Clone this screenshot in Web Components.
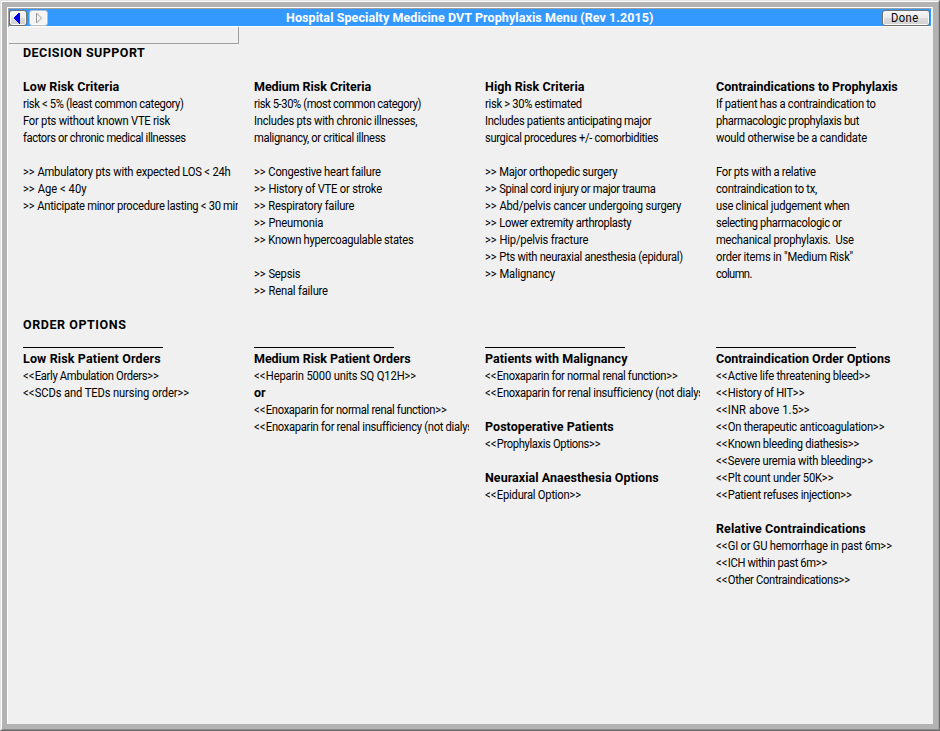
<!DOCTYPE html>
<html lang="en"><head><meta charset="utf-8"><title>DVT Prophylaxis Menu</title>
<style>html,body{margin:0;height:100%;overflow:hidden}body{font-family:Roboto,"Liberation Sans",sans-serif;font-size:12px;color:#000}</style></head><body>
<menu-window></menu-window>
<script>
const make=(el,html)=>{const t=document.createElement('template');t.innerHTML=html;const r=el.attachShadow({mode:'open'});r.append(t.content.cloneNode(true));return r};

// A single line of text whose tracking is adjusted to fill the given width.
class TextLine extends HTMLElement{
 connectedCallback(){
  if(this.shadowRoot)return;
  const r=make(this,`<style>:host{display:block;height:17px;line-height:19px;white-space:pre;overflow:hidden;font-size:12.3px}:host([bold]){font-weight:700;font-size:12.5px;line-height:17px}span{display:inline-block;transform-origin:0 0;transform:scaleX(.91)}:host([bold]) span{transform:none}::slotted(i){display:inline-block;width:13px;font-style:normal;letter-spacing:0}</style><span><slot></slot></span>`);
  const s=r.querySelector('span'),w=+this.getAttribute('w'),k=this.hasAttribute('bold')?1:.91;
  const marks=this.querySelectorAll('i').length*2;
  if(w)s.style.letterSpacing=((w/k-s.offsetWidth)/(this.textContent.length-marks-.5))+'px';
 }}
customElements.define('text-line',TextLine);

class RuleLine extends HTMLElement{constructor(){super();make(this,`<style>:host{display:block;height:17px;box-sizing:border-box;padding-top:14px}div{width:140px;height:1px;background:#000}</style><div></div>`)}}
customElements.define('rule-line',RuleLine);

class BevelButton extends HTMLElement{constructor(){super();make(this,`<style>:host{display:flex;align-items:center;justify-content:center;box-sizing:border-box;height:16px;border:1px solid #707070;border-radius:3px;background:linear-gradient(#f5f5f5,#ececec 48%,#dddddd 52%,#d0d0d0);box-shadow:inset 0 0 0 1px #fafafa;font-size:12px}:host([off]){border-color:#b5bcc4;background:#f4f4f4}</style><slot></slot>`)}}
customElements.define('bevel-button',BevelButton);

class TitleBar extends HTMLElement{constructor(){super();make(this,`<style>:host{display:grid;grid-template-columns:50px 1fr 50px;align-items:center;height:17px;background:#3399ff;border-bottom:1px solid #fff;color:#fff}
.nav{display:flex;gap:2px}.nav bevel-button{width:19px}.nav .back{width:18px}svg{display:block}
.title{justify-self:center;width:368px}.done{color:#000;width:48px;justify-self:end;margin-right:1px}</style>
<div class="nav"><bevel-button class="back"><svg width="14" height="14"><path d="M9 1.5v11H8L3 7 8 1.5z" fill="#0000e8" shape-rendering="crispEdges"/></svg></bevel-button><bevel-button off><svg width="15" height="14"><path d="M5.5 2L10.5 7 5.5 12z" fill="none" stroke="#999"/></svg></bevel-button></div>
<text-line class="title" bold w="368">Hospital Specialty Medicine DVT Prophylaxis Menu (Rev 1.2015)</text-line>
<bevel-button class="done"><text-line w="27">Done</text-line></bevel-button>`)}}
customElements.define('title-bar',TitleBar);

// Rows are [text, width, bold]; null is an empty row and '_' a rule.
const support=[
[['Low Risk Criteria',96,1],['risk < 5% (least common category)',161],['For pts without known VTE risk',147],['factors or chronic medical illnesses',163],null,['>> Ambulatory pts with expected LOS < 24h',208],['>> Age < 40y',64],['>> Anticipate minor procedure lasting < 30 min',218]],
[['Medium Risk Criteria',117,1],['risk 5-30% (most common category)',167],['Includes pts with chronic illnesses,',163],['malignancy, or critical illness',132],null,['>> Congestive heart failure',127],['>> History of VTE or stroke',128],['>> Respiratory failure',100],['>> Pneumonia',69],['>> Known hypercoagulable states',160],null,['>> Sepsis',46],['>> Renal failure',74]],
[['High Risk Criteria',100,1],['risk > 30% estimated',97],['Includes patients anticipating major',166],['surgical procedures +/- comorbidities',173],null,['>> Major orthopedic surgery',132],['>> Spinal cord injury or major trauma',171],['>> Abd/pelvis cancer undergoing surgery',196],['>> Lower extremity arthroplasty',146],['>> Hip/pelvis fracture',103],['>> Pts with neuraxial anesthesia (epidural)',198],['>> Malignancy',70]],
[['Contraindications to Prophylaxis',182,1],['If patient has a contraindication to',160],['pharmacologic prophylaxis but',143],['would otherwise be a candidate',151],null,['For pts with a relative',100],['contraindication to tx,',101],['use clinical judgement when',134],['selecting pharmacologic or',126],['mechanical prophylaxis.  Use',138],['order items in "Medium Risk"',137],['column.',36]]];
const orders=[
['_',['Low Risk Patient Orders',138,1],['<<Early Ambulation Orders>>',136],['<<SCDs and TEDs nursing order>>',166]],
['_',['Medium Risk Patient Orders',157,1],['<<Heparin 5000 units SQ Q12H>>',162],['or',12,1],['<<Enoxaparin for normal renal function>>',193],['<<Enoxaparin for renal insufficiency (not dialys',218]],
['_',['Patients with Malignancy',142,1],['<<Enoxaparin for normal renal function>>',193],['<<Enoxaparin for renal insufficiency (not dialys',218],null,['Postoperative Patients',129,1],['<<Prophylaxis Options>>',116],null,['Neuraxial Anaesthesia Options',174,1],['<<Epidural Option>>',96]],
['_',['Contraindication Order Options',174,1],['<<Active life threatening bleed>>',155],['<<History of HIT>>',89],['<<INR above 1.5>>',94],['<<On therapeutic anticoagulation>>',169],['<<Known bleeding diathesis>>',144],['<<Severe uremia with bleeding>>',157],['<<Plt count under 50K>>',118],['<<Patient refuses injection>>',136],null,['Relative Contraindications',150,1],['<<GI or GU hemorrhage in past 6m>>',176],['<<ICH within past 6m>>',112],['<<Other Contraindications>>',134]]];
const esc=s=>s.replace(/&/g,'&amp;').replace(/</g,'&lt;').replace(/>/g,'&gt;').replace(/(&lt;&lt;|&gt;&gt;)/g,'<i>$1</i>');
const row=r=>r===null?'<text-line></text-line>':r==='_'?'<rule-line></rule-line>':`<text-line w="${r[1]}"${r[2]?' bold':''}>${esc(r[0])}</text-line>`;

class MenuSection extends HTMLElement{
 connectedCallback(){
  if(this.shadowRoot)return;
  const cols=this.getAttribute('kind')==='support'?support:orders;
  make(this,`<style>:host{display:block}.cols{display:grid;grid-template-columns:repeat(4,215px);gap:16px}.gap{height:17px}</style><slot></slot>${cols===support?'<div class="gap"></div>':''}<div class="cols">${cols.map(c=>`<div>${c.map(row).join('')}</div>`).join('')}</div>`);
 }}
customElements.define('menu-section',MenuSection);

class MenuWindow extends HTMLElement{constructor(){super();make(this,`<style>
:host{display:block;box-sizing:border-box;width:940px;height:731px;background:#b3b3b3;border:1px solid #e3e3e3;border-right-color:#696969;border-bottom-color:#696969}
.edge{box-sizing:border-box;height:100%;border:1px solid #fff;border-right-color:#a0a0a0;border-bottom-color:#8c8c8c;padding:5px}
.inner{box-sizing:border-box;height:100%;background:#f0f0f0;border-top:1px solid #fff;border-left:1px solid #fff;}
.head{border-top:1px solid #a0a0a0;border-left:1px solid #a0a0a0;border-right:1px solid #fff;margin-right:1px}
.tab{box-sizing:border-box;width:230px;height:17px;margin-left:1px;border-right:1px solid #a0a0a0;border-bottom:1px solid #a0a0a0}
.body{padding:0 0 0 15px}.body menu-section+menu-section{margin-top:17px}</style>
<div class="edge"><div class="inner"><div class="head"><title-bar></title-bar></div><div class="tab"></div><div class="body">
<menu-section kind="support"><text-line bold w="122">DECISION SUPPORT</text-line></menu-section>
<menu-section kind="orders"><text-line bold w="103">ORDER OPTIONS</text-line></menu-section></div></div></div>`)}}
customElements.define('menu-window',MenuWindow);
</script></body></html>
